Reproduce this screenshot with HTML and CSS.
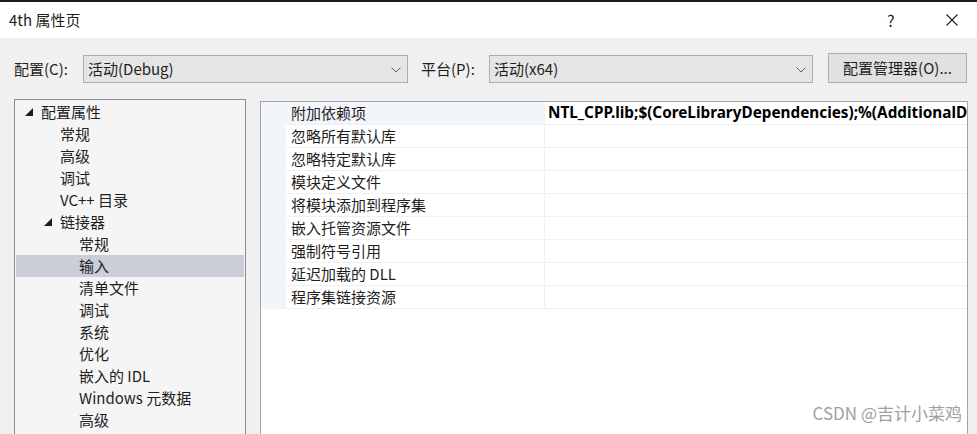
FILE: index.html
```html
<!DOCTYPE html>
<html lang="zh-CN">
<head>
<meta charset="utf-8">
<title>4th 属性页</title>
<link rel="stylesheet" href="styles.css">
</head>
<body>
<div class="topbar"></div>
<div class="titlebar">
  <span class="title">4th 属性页</span>
  <span class="help">?</span>
  <svg class="close" width="12" height="12" viewBox="0 0 12 12"><path d="M0.5 0.5 L11.5 11.5 M11.5 0.5 L0.5 11.5" stroke="#1e1e1e" stroke-width="1.1" fill="none"/></svg>
</div>
<div class="toolbar">
  <span class="label">配置(C):</span>
  <div class="combo combo-config">
    <span>活动(Debug)</span>
    <svg class="chev" width="10" height="6" viewBox="0 0 10 6"><path d="M0.5 0.5 L5 5 L9.5 0.5" stroke="#606060" stroke-width="1" fill="none"/></svg>
  </div>
  <span class="label label-platform">平台(P):</span>
  <div class="combo combo-platform">
    <span>活动(x64)</span>
    <svg class="chev" width="10" height="6" viewBox="0 0 10 6"><path d="M0.5 0.5 L5 5 L9.5 0.5" stroke="#606060" stroke-width="1" fill="none"/></svg>
  </div>
  <div class="button">配置管理器(O)...</div>
</div>
<div class="main">
  <div class="tree">
    <div class="node l0"><svg class="tri" width="8" height="8" viewBox="0 0 8 8"><path d="M8 0 L8 8 L0 8 Z" fill="#1e1e1e"/></svg><span>配置属性</span></div>
    <div class="node l1"><span class="sp"></span><span>常规</span></div>
    <div class="node l1"><span class="sp"></span><span>高级</span></div>
    <div class="node l1"><span class="sp"></span><span>调试</span></div>
    <div class="node l1"><span class="sp"></span><span>VC++ 目录</span></div>
    <div class="node l1"><svg class="tri" width="8" height="8" viewBox="0 0 8 8"><path d="M8 0 L8 8 L0 8 Z" fill="#1e1e1e"/></svg><span>链接器</span></div>
    <div class="node l2"><span class="sp"></span><span>常规</span></div>
    <div class="node l2 selected"><span class="sp"></span><span>输入</span></div>
    <div class="node l2"><span class="sp"></span><span>清单文件</span></div>
    <div class="node l2"><span class="sp"></span><span>调试</span></div>
    <div class="node l2"><span class="sp"></span><span>系统</span></div>
    <div class="node l2"><span class="sp"></span><span>优化</span></div>
    <div class="node l2"><span class="sp"></span><span>嵌入的 IDL</span></div>
    <div class="node l2"><span class="sp"></span><span>Windows 元数据</span></div>
    <div class="node l2"><span class="sp"></span><span>高级</span></div>
  </div>
  <div class="grid-panel">
    <div class="grid">
      <div class="gutter"></div><div class="name current">附加依赖项</div><div class="value bold">NTL_CPP.lib;$(CoreLibraryDependencies);%(AdditionalDependencies)</div>
      <div class="gutter"></div><div class="name">忽略所有默认库</div><div class="value"></div>
      <div class="gutter"></div><div class="name">忽略特定默认库</div><div class="value"></div>
      <div class="gutter"></div><div class="name">模块定义文件</div><div class="value"></div>
      <div class="gutter"></div><div class="name">将模块添加到程序集</div><div class="value"></div>
      <div class="gutter"></div><div class="name">嵌入托管资源文件</div><div class="value"></div>
      <div class="gutter"></div><div class="name">强制符号引用</div><div class="value"></div>
      <div class="gutter"></div><div class="name">延迟加载的 DLL</div><div class="value"></div>
      <div class="gutter"></div><div class="name">程序集链接资源</div><div class="value"></div>
    </div>
  </div>
</div>
<div class="watermark">CSDN @吉计小菜鸡</div>
</body>
</html>
```

FILE: styles.css
```css
html, body {
  margin: 0;
  padding: 0;
}
body {
  width: 977px;
  height: 434px;
  overflow: hidden;
  background: #f0f0f0;
  font-family: "Noto Sans CJK SC", "Noto Sans", sans-serif;
  font-size: 15px;
  color: #1e1e1e;
  position: relative;
}
.topbar {
  height: 2px;
  background: #1c1c1c;
}
.titlebar {
  height: 36px;
  background: #ffffff;
  display: flex;
  align-items: center;
  padding-left: 9px;
}
.title {
  flex: 1;
  line-height: 20px;
}
.help {
  width: 10px;
  font-size: 16px;
  line-height: 20px;
  margin-right: 49px;
  color: #1e1e1e;
}
.close {
  margin-right: 19px;
}
.toolbar {
  display: flex;
  align-items: flex-end;
  padding: 15px 0 0 14px;
  height: 30px;
}
.label {
  height: 28px;
  line-height: 28px;
  width: 69px;
}
.label-platform {
  margin-left: 13px;
  width: 68px;
}
.combo {
  box-sizing: border-box;
  height: 28px;
  background: #e5e5e5;
  border: 1px solid #acacac;
  display: flex;
  align-items: center;
  justify-content: space-between;
  padding: 0 6px 0 4px;
  line-height: 26px;
}
.combo-config {
  width: 325px;
}
.combo-platform {
  width: 324px;
}
.chev {
  margin-top: 1px;
}
.button {
  box-sizing: border-box;
  margin-left: 15px;
  width: 139px;
  height: 30px;
  background: #e1e1e1;
  border: 1px solid #adadad;
  text-align: center;
  line-height: 28px;
}
.main {
  display: flex;
  align-items: flex-start;
  margin-top: 16px;
  padding-left: 14px;
  height: 335px;
  overflow: hidden;
}
.tree {
  box-sizing: border-box;
  width: 232px;
  height: 360px;
  background: #f5f5f5;
  border: 1px solid #8d8f95;
  padding: 1px 1px 0 1px;
}
.node {
  height: 22px;
  display: flex;
  align-items: center;
  line-height: 22px;
  white-space: nowrap;
}
.node.l0 { padding-left: 9px; }
.node.l1 { padding-left: 28px; }
.node.l2 { padding-left: 47px; }
.tri, .sp {
  width: 8px;
  height: 8px;
  margin-right: 8px;
  flex: none;
  display: block;
}
.tri { margin-top: -1px; }
.node.selected {
  background: #cbcdd9;
}
.grid-panel {
  box-sizing: border-box;
  margin-left: 14px;
  margin-top: 2px;
  width: 708px;
  height: 360px;
  background: #ffffff;
  border: 1px solid #a4a4a4;
  overflow: hidden;
}
.grid {
  display: grid;
  grid-template-columns: 25px 259px 1fr;
  grid-auto-rows: 23px;
}
.gutter {
  background: #f2f5fa;
}
.name, .value {
  box-sizing: border-box;
  border-bottom: 1px solid #f0f0f0;
  line-height: 21px;
  white-space: nowrap;
  overflow: hidden;
}
.name {
  padding-left: 5px;
  border-right: 1px solid #f0f0f0;
}
.name.current {
  background: #f2f5fa;
}
.value {
  padding-left: 3px;
}
.value.bold {
  font-family: "Noto Sans", "Noto Sans CJK SC", sans-serif;
  font-weight: bold;
  font-size: 15.3px;
  color: #000000;
}
.watermark {
  position: absolute;
  right: 15px;
  bottom: 10px;
  font-family: "Noto Sans CJK SC", "Noto Sans", sans-serif;
  font-size: 17px;
  color: #a0a0a0;
  line-height: 22px;
}
```
